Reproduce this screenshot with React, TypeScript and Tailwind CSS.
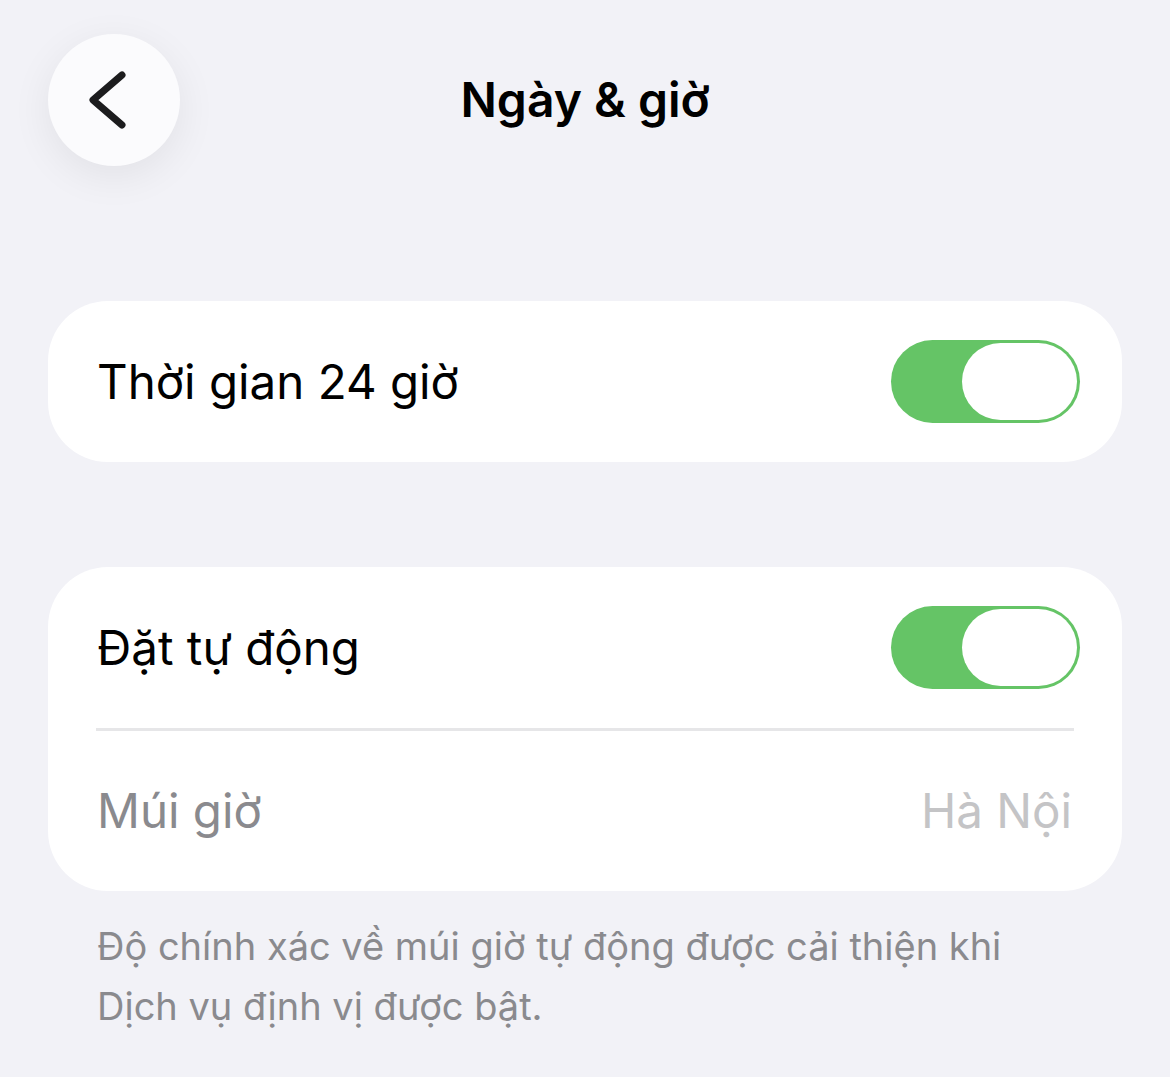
type Row = { label: string; on: boolean };

// iOS-style switch: green track, white knob pushed to the right
function Toggle({ on }: { on: boolean }) {
  return (
    <div
      className={`flex h-[83px] w-[189px] items-center rounded-full p-[3px] ${
        on ? "justify-end bg-[#65c466]" : "justify-start bg-[#e9e9eb]"
      }`}
    >
      <div className="h-[77px] w-[115px] rounded-full bg-white" />
    </div>
  );
}

function ToggleRow({ label, on }: Row) {
  return (
    <div className="flex h-[161px] items-center justify-between pl-[49px] pr-[42px]">
      <span className="text-[47.5px] text-black">{label}</span>
      <Toggle on={on} />
    </div>
  );
}

export default function App() {
  return (
    <div
      className="min-h-[1077px] w-full bg-[#f2f2f7] px-12"
      style={{ fontFamily: "Inter, 'Noto Sans', sans-serif" }}
    >
      {/* header */}
      <div className="flex h-[200px] items-start pt-[34px]">
        <button className="h-[132px] w-[132px] shrink-0 rounded-full bg-[#fbfbfd] shadow-[0_10px_40px_rgba(0,0,0,0.07)]">
          <svg viewBox="0 0 132 132" className="h-[132px] w-[132px]">
            <polyline
              points="74,41 45,66 74,91"
              fill="none"
              stroke="#1c1c1e"
              strokeWidth="7"
              strokeLinecap="round"
              strokeLinejoin="round"
            />
          </svg>
        </button>
        <h1 className="-ml-[132px] flex h-[132px] flex-1 items-center justify-center text-[48px] font-semibold text-black">
          Ngày &amp; giờ
        </h1>
      </div>

      {/* 24-hour clock */}
      <div className="mt-[101px] rounded-[60px] bg-white">
        <ToggleRow label="Thời gian 24 giờ" on />
      </div>

      {/* automatic time + zone */}
      <div className="mt-[105px] rounded-[60px] bg-white">
        <ToggleRow label="Đặt tự động" on />
        <div className="ml-[48px] mr-[48px] h-[3px] bg-[#e6e6e8]" />
        <div className="flex h-[160px] items-center justify-between pl-[49px] pr-[50px]">
          <span className="text-[47.5px] text-[#8a8a8e]">Múi giờ</span>
          <span className="text-[47.5px] text-[#c4c4c6]">Hà Nội</span>
        </div>
      </div>

      <p className="mt-[25px] pl-[49px] pr-[60px] text-[38px] leading-[60px] text-[#8a8a8e]">
        Độ chính xác về múi giờ tự động được cải thiện khi Dịch vụ định vị được bật.
      </p>
    </div>
  );
}
